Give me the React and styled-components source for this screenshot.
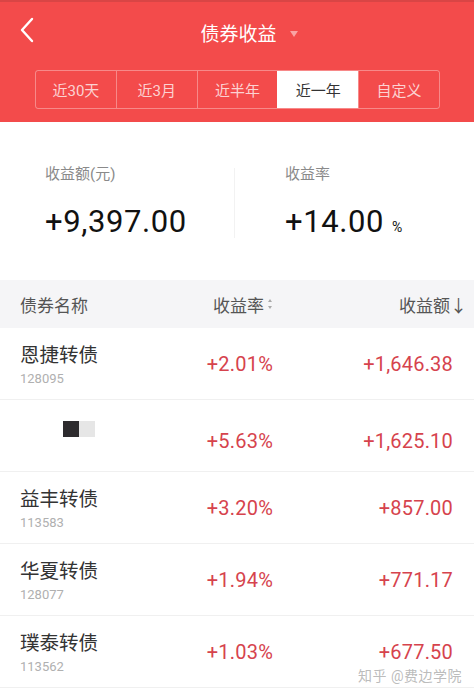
import React from 'react';
import styled, { createGlobalStyle } from 'styled-components';

const GlobalStyle = createGlobalStyle`
  html, body {
    margin: 0;
    padding: 0;
    background: #fff;
  }
  body {
    font-family: Roboto, "Noto Sans CJK SC", "Noto Sans", sans-serif;
    -webkit-font-smoothing: antialiased;
  }
`;

const Page = styled.div`
  width: 474px;
  height: 695px;
  overflow: hidden;
  background: #fff;
  position: relative;
`;

const Header = styled.header`
  background: #f34b4b;
  border-top: 2px solid #d94545;
  height: 120px;
  display: flex;
  flex-direction: column;
`;

const TitleBar = styled.div`
  height: 60px;
  display: flex;
  align-items: center;
  justify-content: center;
  position: relative;
`;

const BackButton = styled.div`
  position: absolute;
  left: 17px;
  top: 14px;
  width: 20px;
  height: 28px;
  display: flex;
  align-items: center;
  justify-content: center;
`;

const Title = styled.h1`
  margin: 0;
  font-size: 19px;
  font-weight: 400;
  color: #fff;
  display: flex;
  align-items: center;
  gap: 13px;
  padding-left: 24px;
`;

const Caret = styled.span`
  width: 0;
  height: 0;
  border-left: 4px solid transparent;
  border-right: 4px solid transparent;
  border-top: 6px solid #f9a3a3;
  margin-top: 3px;
`;

const Tabs = styled.div`
  margin: 8px 34px 0 35px;
  height: 37px;
  display: flex;
  border: 1px solid rgba(255, 255, 255, 0.35);
  border-radius: 3px;
  overflow: hidden;
`;

const Tab = styled.div`
  flex: 1;
  display: flex;
  align-items: center;
  justify-content: center;
  font-size: 15px;
  color: ${p => (p.$active ? '#333' : '#fcd2d2')};
  background: ${p => (p.$active ? '#fff' : 'transparent')};
  & + & {
    border-left: 1px solid rgba(255, 255, 255, 0.35);
  }
`;

const Summary = styled.section`
  height: 158px;
  display: flex;
  align-items: stretch;
`;

const Stat = styled.div`
  flex: 1;
  padding: 42px 0 0 ${p => p.$pad}px;
  display: flex;
  flex-direction: column;
`;

const StatLabel = styled.div`
  font-size: 15px;
  color: #8a8a8a;
  line-height: 20px;
`;

const StatValue = styled.div`
  margin-top: 18px;
  font-size: 31px;
  color: #111;
  line-height: 40px;
  letter-spacing: 0.6px;
`;

const Unit = styled.span`
  font-size: 14px;
  margin-left: 8px;
`;

const Divider = styled.div`
  width: 1px;
  margin: 46px 0 42px;
  background: #f2f2f2;
`;

const Grid = styled.div`
  display: grid;
  grid-template-columns: 1fr 130px ${p => p.$amountWidth}px;
  align-items: center;
  padding: 0 ${p => p.$padRight}px 0 20px;
`;

const TableHead = styled(Grid)`
  height: 48px;
  background: #f5f5f7;
  font-size: 17px;
  color: #555;
`;

const HeadCell = styled.div`
  display: flex;
  align-items: center;
  justify-content: ${p => (p.$right ? 'flex-end' : 'flex-start')};
  gap: 3px;
`;

const Row = styled(Grid)`
  height: 72px;
  border-bottom: 1px solid #f0f0f0;
  box-sizing: border-box;
`;

const NameCell = styled.div`
  display: flex;
  flex-direction: column;
  padding-top: ${p => (p.$noCode ? '0' : '4px')};
`;

const BondName = styled.div`
  font-size: 19.5px;
  color: #333;
  line-height: 26px;
`;

const BondCode = styled.div`
  font-size: 13px;
  color: #b0b0b0;
  line-height: 18px;
  margin-top: 1px;
`;

const Masked = styled.div`
  display: flex;
  margin: -14px 0 0 43px;
`;

const Block = styled.span`
  width: 16px;
  height: 16px;
  background: ${p => p.$color};
`;

const Num = styled.div`
  text-align: right;
  font-size: 20px;
  color: #d6434d;
  letter-spacing: 0.2px;
  padding-top: ${p => (p.$noCode ? '10px' : '0')};
`;

const Watermark = styled.div`
  position: absolute;
  right: 12px;
  bottom: 10px;
  font-size: 14px;
  color: rgba(170, 170, 170, 0.8);
  letter-spacing: 0.5px;
`;

const tabs = ['近30天', '近3月', '近半年', '近一年', '自定义'];

const bonds = [
  { name: '恩捷转债', code: '128095', rate: '+2.01%', amount: '+1,646.38' },
  { name: null, code: null, rate: '+5.63%', amount: '+1,625.10' },
  { name: '益丰转债', code: '113583', rate: '+3.20%', amount: '+857.00' },
  { name: '华夏转债', code: '128077', rate: '+1.94%', amount: '+771.17' },
  { name: '璞泰转债', code: '113562', rate: '+1.03%', amount: '+677.50' },
];

const SortIcon = () => (
  <svg width="6" height="14" viewBox="0 0 6 14">
    <path d="M3 2 L5 5 L1 5 Z" fill="#aaa" />
    <path d="M3 12 L5 9 L1 9 Z" fill="#aaa" />
  </svg>
);

export default function App() {
  return (
    <Page>
      <GlobalStyle />
      <Header>
        <TitleBar>
          <BackButton>
            <svg width="16" height="26" viewBox="0 0 16 26">
              <path d="M13 2 L3 13 L13 24" fill="none" stroke="#fff" strokeWidth="2.4" strokeLinecap="round" strokeLinejoin="round" />
            </svg>
          </BackButton>
          <Title>
            债券收益
            <Caret />
          </Title>
        </TitleBar>
        <Tabs>
          {tabs.map(t => (
            <Tab key={t} $active={t === '近一年'}>{t}</Tab>
          ))}
        </Tabs>
      </Header>

      <Summary>
        <Stat $pad={45}>
          <StatLabel>收益额(元)</StatLabel>
          <StatValue>+9,397.00</StatValue>
        </Stat>
        <Divider />
        <Stat $pad={50}>
          <StatLabel>收益率</StatLabel>
          <StatValue>+14.00<Unit>%</Unit></StatValue>
        </Stat>
      </Summary>

      <TableHead $amountWidth={194} $padRight={7}>
        <HeadCell>债券名称</HeadCell>
        <HeadCell $right>收益率<SortIcon /></HeadCell>
        <HeadCell $right>收益额↓</HeadCell>
      </TableHead>

      {bonds.map((b, i) => (
        <Row key={i} $amountWidth={180} $padRight={21}>
          {b.name ? (
            <NameCell>
              <BondName>{b.name}</BondName>
              <BondCode>{b.code}</BondCode>
            </NameCell>
          ) : (
            <NameCell $noCode>
              <Masked>
                <Block $color="#2d2b2e" />
                <Block $color="#e6e6e6" />
              </Masked>
            </NameCell>
          )}
          <Num $noCode={!b.name}>{b.rate}</Num>
          <Num $noCode={!b.name}>{b.amount}</Num>
        </Row>
      ))}

      <Watermark>知乎 @费边学院</Watermark>
    </Page>
  );
}
